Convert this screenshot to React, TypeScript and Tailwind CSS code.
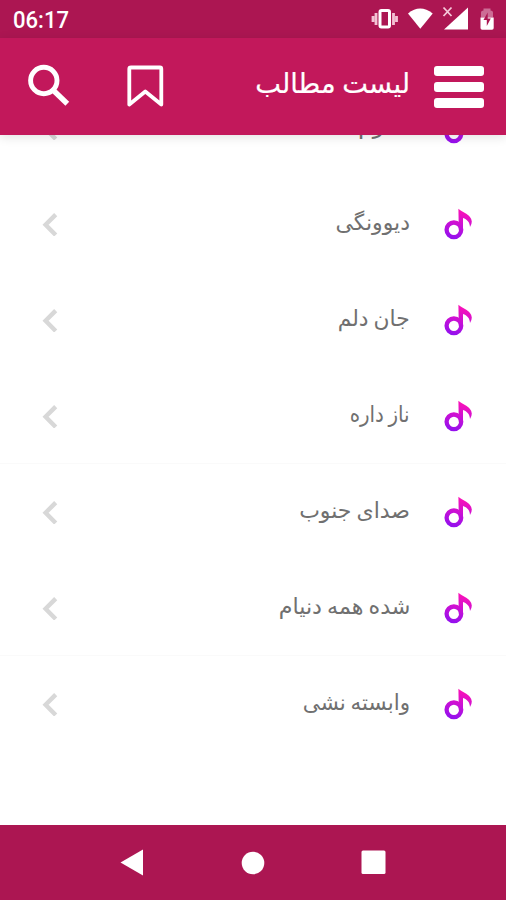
import React from "react";

type Song = { title: string; divider: boolean; fit: string };

const songs: Song[] = [
  { title: "ندارم", divider: false, fit: "scale-x-[1.08]" },
  { title: "دیوونگی", divider: false, fit: "scale-x-100" },
  { title: "جان دلم", divider: false, fit: "scale-x-[0.99]" },
  { title: "ناز داره", divider: true, fit: "scale-x-[0.9]" },
  { title: "صدای جنوب", divider: false, fit: "scale-x-100" },
  { title: "شده همه دنیام", divider: true, fit: "scale-x-[1.01]" },
  { title: "وابسته نشی", divider: false, fit: "scale-x-[0.975]" },
];

function NoteIcon() {
  return (
    <svg className="block h-8 w-8 shrink-0" viewBox="0 0 32 32">
      <defs>
        <linearGradient id="note" gradientUnits="userSpaceOnUse" x1="20" y1="1" x2="12" y2="31">
          <stop offset="0" stopColor="#ff12b4" />
          <stop offset="0.5" stopColor="#cc10d4" />
          <stop offset="1" stopColor="#9310ee" />
        </linearGradient>
      </defs>
      <circle cx="11.9" cy="21.8" r="7.3" fill="none" stroke="url(#note)" strokeWidth="4.3" />
      <path
        d="M16.4 0.8 C20 4.5 29.4 6.5 29.8 13.5 Q29.8 16.5 28 19 C27.8 14 25 11.5 21 10 V22 H16.8 Z"
        fill="url(#note)"
      />
    </svg>
  );
}

function Chevron() {
  return (
    <svg className="block h-6 w-4 shrink-0" viewBox="0 0 16 24" fill="none" stroke="#d8d8d8" strokeWidth="4.4">
      <path d="M13.7 2.6 L3.6 12.8 L13.7 23" />
    </svg>
  );
}

function StatusBar() {
  return (
    <div className="flex h-[38px] shrink-0 items-center justify-between bg-[#ac1652] pl-[13px] pr-[10px] text-white">
      <span className="origin-left scale-x-[0.96] pt-[3px] font-['Roboto',sans-serif] text-[23px] font-medium leading-none">06:17</span>
      <svg className="block h-[38px] w-[128px]" viewBox="368 0 128 38" fill="#fff">
        <rect x="380" y="10.5" width="9.5" height="16.5" rx="1.5" fill="none" stroke="#fff" strokeWidth="3" />
        <path d="M376 13v12M373 16v6M393.5 13v12M396.5 16v6" stroke="#f3c3d5" strokeWidth="2.8" fill="none" />
        <path d="M408 13.5 Q420 3.5 432.7 13.5 L420.3 28.8 Z" />
        <path d="M444 29.5 L468 7.5 V29.5 Z" />
        <path d="M443.5 7.5 l8 8.5 m0 -8.5 l-8 8.5" stroke="#f6c9da" strokeWidth="1.8" fill="none" />
        <path d="M481 17.5 V12.5 Q481 10.5 483.5 10.5 V8.5 H490.5 V10.5 Q493 10.5 493 12.5 V17.5 Z" fill="#cc6d95" />
        <path d="M480.5 17.5 H493.7 V28 Q493.7 29.7 492 29.7 H482.2 Q480.5 29.7 480.5 28 Z" />
        <path d="M487.7 12.5 L483.5 20 H486.8 V26 L490.8 18.5 H487.7 Z" fill="#ac1652" />
      </svg>
    </div>
  );
}

function Toolbar() {
  return (
    <header className="relative z-10 flex h-[97px] shrink-0 items-center bg-[#c2185b] pr-[22px] shadow-[0_2px_10px_rgba(0,0,0,0.12)]">
      <svg className="block h-[97px] w-[180px]" viewBox="0 38 180 97" fill="none" stroke="#fff">
        <circle cx="43.8" cy="80.5" r="13.2" strokeWidth="4.9" />
        <path d="M53 90 L67.3 103.7" strokeWidth="5.4" />
        <path
          d="M131 67.5 H160 Q161.3 67.5 161.3 69 V104.5 L145.3 91.5 L129.3 104.5 V69 Q129.3 67.5 131 67.5 Z"
          strokeWidth="3.8"
          strokeLinejoin="round"
        />
      </svg>
      <h1 dir="rtl" className="mb-[5px] ml-auto mr-6 whitespace-nowrap font-['DejaVu_Sans',sans-serif] text-[27.3px] leading-none text-white [word-spacing:-2px] [-webkit-text-stroke:0.2px_white]">
        لیست مطالب
      </h1>
      <div className="flex w-[50px] flex-col gap-[6px]">
        <div className="h-[10px] rounded-[3px] bg-white" />
        <div className="h-[10px] rounded-[3px] bg-white" />
        <div className="h-[10px] rounded-[3px] bg-white" />
      </div>
    </header>
  );
}

function SongRow({ title, divider, fit }: Song) {
  return (
    <li className={divider ? "flex h-24 shrink-0 items-center border-b border-[#fafafa] pl-[42px] pr-8" : "flex h-24 shrink-0 items-center pl-[42px] pr-8"}>
      <Chevron />
      <span dir="rtl" className="mb-[2px] ml-auto mr-8 whitespace-nowrap font-['DejaVu_Sans',sans-serif] text-[22px] leading-none text-[#707070] [word-spacing:-2px]">
        <span className={`inline-block origin-right ${fit}`}>{title}</span>
      </span>
      <NoteIcon />
    </li>
  );
}

function NavBar() {
  return (
    <nav className="flex h-[75px] shrink-0 items-center bg-[#ac1652]">
      <svg className="block h-[75px] w-full" viewBox="0 825 506 75" fill="#fff">
        <path d="M120.5 862.5 L143 849.5 V875.5 Z" />
        <circle cx="253" cy="863" r="11.3" />
        <rect x="361.5" y="850.5" width="24" height="23.5" rx="1.5" />
      </svg>
    </nav>
  );
}

export default function App() {
  return (
    <div className="flex h-[900px] w-[506px] flex-col overflow-hidden bg-white">
      <StatusBar />
      <Toolbar />
      <main className="min-h-0 flex-1 overflow-hidden">
        <ul className="-mt-[55px] flex flex-col">
          {songs.map((song) => (
            <SongRow key={song.title} title={song.title} divider={song.divider} fit={song.fit} />
          ))}
        </ul>
      </main>
      <NavBar />
    </div>
  );
}
